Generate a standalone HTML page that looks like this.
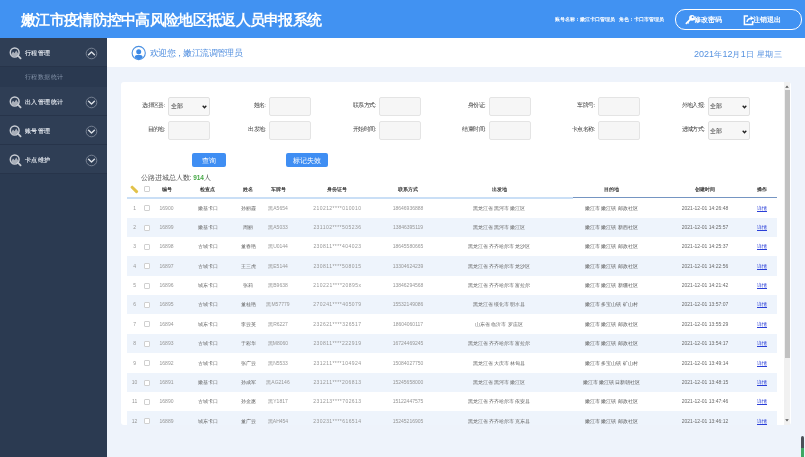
<!DOCTYPE html>
<html><head><meta charset="utf-8">
<style>
*{margin:0;padding:0;box-sizing:border-box;}
html,body{width:805px;height:457px;overflow:hidden;}
body{will-change:transform;background:#eef3fb;font-family:"Liberation Sans",sans-serif;}
.abs{position:absolute;}
#hdr{position:absolute;left:0;top:0;width:805px;height:38px;background:#4192f2;}
#title{position:absolute;left:21px;top:10.5px;font-size:15px;font-weight:700;color:#fff;white-space:nowrap;letter-spacing:-0.7px;}
#acct{position:absolute;left:555px;top:15.5px;font-size:5.4px;color:#fff;font-weight:bold;white-space:nowrap;}
#pill{position:absolute;left:674.5px;top:9px;width:127px;height:20.5px;border:1px solid #fff;border-radius:10px;}
.pt{position:absolute;top:5.2px;font-size:7px;font-weight:bold;color:#fff;white-space:nowrap;}
#side{position:absolute;left:0;top:38px;width:107px;height:419px;background:#2b3a51;}
.mi{position:absolute;left:0;width:107px;height:29px;background:#2f3e55;border-bottom:1px solid #27344a;}
.mi .ic{position:absolute;left:8px;top:6px;}
.mi .tx{position:absolute;left:25px;top:11.3px;font-size:6px;letter-spacing:0.4px;font-weight:700;color:#d9dee6;white-space:nowrap;}
.mi .cv{position:absolute;left:85px;top:9px;}
.sub{position:absolute;left:0;top:29px;width:107px;height:20px;background:#2a3950;}
.sub .tx{position:absolute;left:25px;top:6.2px;font-size:6px;letter-spacing:0.4px;color:#8796ac;white-space:nowrap;}
.cj{font-size:8px;letter-spacing:0.4px;}
#welc{position:absolute;left:107px;top:38px;width:698px;height:29px;background:#fff;}
#card{position:absolute;left:121px;top:82px;width:670px;height:343px;background:#fff;border-radius:3px;overflow:hidden;}
.lbl{position:absolute;font-size:6px;letter-spacing:-0.6px;font-weight:500;color:#3a3a3a;white-space:nowrap;text-align:right;}
.inp{position:absolute;width:42px;height:19px;background:#f6f6f6;border:1px solid #e4e4e4;border-radius:2px;}
.sel{position:absolute;width:42px;height:19px;background:#f7f7f7;border:1px solid #e0e0e0;border-radius:2px;}
.sel span{position:absolute;left:1.5px;top:4.5px;font-size:6px;font-weight:500;color:#222;}
.sel .arr{position:absolute;right:2px;top:7.5px;}
.btn{position:absolute;height:14px;background:#3f8ef3;border-radius:2px;color:#fff;font-size:6.5px;text-align:center;line-height:16px;}
.th,.td{position:absolute;width:120px;text-align:center;white-space:nowrap;font-size:5px;}
.th{color:#333;font-weight:bold;}
.td{color:#969696;font-weight:500;}
.td.cjk{color:#686868;}
.td.tm{color:#6a6a6a;}
.td.nm{color:#606060;}
.td.dk{color:#555;}
.td.op{color:#2a3fd8;}
.td.idc{letter-spacing:0.45px;}
.stripe{position:absolute;left:6.3px;width:649.4px;background:#eef4fc;}
.thline{position:absolute;left:6.3px;width:445.5px;height:2px;background:#cadff6;}
.thline2{position:absolute;left:451.8px;width:203.9px;height:1px;background:#7595c2;}
.cb{position:absolute;width:6px;height:6px;border:1px solid #d0d0d0;border-radius:1px;background:#fff;}
.pen{position:absolute;width:9px;height:2.6px;background:#e2c24a;transform:rotate(45deg);border-radius:1px;}
#sb{position:absolute;left:784px;top:82px;width:6px;height:343px;background:#f1f1f1;}
#thumb{position:absolute;left:784.8px;top:90px;width:5.2px;height:268px;background:#c1c1c1;}
#gbar{position:absolute;left:801px;top:436px;width:3px;height:25px;border-radius:1.5px;background:linear-gradient(#4b5057 0,#4b5057 12px,#3fa863 12px);}
</style></head><body>
<div id="hdr">
  <div id="title">嫩江市疫情防控中高风险地区抵返人员申报系统</div>
  <div id="acct">账号名称：嫩江卡口管理员&nbsp;&nbsp;&nbsp;角色：卡口市管理员</div>
  <div id="pill">
    <svg class="abs" style="left:9px;top:4px;" width="11" height="11" viewBox="0 0 11 11"><circle cx="7" cy="3.8" r="2.9" fill="#fff"/><circle cx="7.6" cy="3.2" r="0.9" fill="#4391ef"/><path d="M5.6 5.2 L1.4 9.4" stroke="#fff" stroke-width="1.8" stroke-linecap="round"/><path d="M2.6 8.2 L3.8 9.4" stroke="#fff" stroke-width="1.2"/></svg><div class="pt" style="left:18.3px;">修改密码</div>
    <svg class="abs" style="left:67px;top:4px;" width="12" height="12" viewBox="0 0 12 12"><path d="M5 2 H1.4 V10.4 H9.6 V7" fill="none" stroke="#fff" stroke-width="1.5"/><path d="M4 8 Q4.5 4.5 8.4 4.2" fill="none" stroke="#fff" stroke-width="1.5"/><path d="M7.6 1.8 L10.6 4.2 L7.6 6.6 Z" fill="#fff"/></svg><div class="pt" style="left:77.5px;">注销退出</div>
  </div>
</div>
<div id="side">
  <div class="mi" style="top:0;"><svg class="ic" width="18" height="18" viewBox="0 0 18 18"><circle cx="6.7" cy="8.5" r="4.4" fill="none" stroke="#c9cdd4" stroke-width="1.5"/><path d="M3.2 10.6 L5 7.6 L6.6 9.2 L8.2 6.4 L10.2 9.8 L9.6 11.6 L7 13 L4.6 12.6 Z" fill="#a9afb9"/><path d="M9.9 11.7 L12.6 14.4" stroke="#c9cdd4" stroke-width="1.8" stroke-linecap="round"/></svg><div class="tx">行程管理</div><svg class="cv" width="13" height="13" viewBox="0 0 13 13"><circle cx="6.5" cy="6.5" r="5.3" fill="none" stroke="#7d8797" stroke-width="0.9"/><path d="M3.6 7.7 L6.5 4.9 L9.4 7.7" fill="none" stroke="#dde1e7" stroke-width="1.4" stroke-linecap="round" stroke-linejoin="round"/></svg></div>
  <div class="sub"><div class="tx">行程数据统计</div></div>
  <div class="mi" style="top:49px;"><svg class="ic" width="18" height="18" viewBox="0 0 18 18"><circle cx="6.7" cy="8.5" r="4.4" fill="none" stroke="#c9cdd4" stroke-width="1.5"/><path d="M3.2 10.6 L5 7.6 L6.6 9.2 L8.2 6.4 L10.2 9.8 L9.6 11.6 L7 13 L4.6 12.6 Z" fill="#a9afb9"/><path d="M9.9 11.7 L12.6 14.4" stroke="#c9cdd4" stroke-width="1.8" stroke-linecap="round"/></svg><div class="tx">出入管理统计</div><svg class="cv" width="13" height="13" viewBox="0 0 13 13"><circle cx="6.5" cy="6.5" r="5.3" fill="none" stroke="#7d8797" stroke-width="0.9"/><path d="M3.6 5.3 L6.5 8.1 L9.4 5.3" fill="none" stroke="#dde1e7" stroke-width="1.4" stroke-linecap="round" stroke-linejoin="round"/></svg></div>
  <div class="mi" style="top:78px;"><svg class="ic" width="18" height="18" viewBox="0 0 18 18"><circle cx="6.7" cy="8.5" r="4.4" fill="none" stroke="#c9cdd4" stroke-width="1.5"/><path d="M3.2 10.6 L5 7.6 L6.6 9.2 L8.2 6.4 L10.2 9.8 L9.6 11.6 L7 13 L4.6 12.6 Z" fill="#a9afb9"/><path d="M9.9 11.7 L12.6 14.4" stroke="#c9cdd4" stroke-width="1.8" stroke-linecap="round"/></svg><div class="tx">账号管理</div><svg class="cv" width="13" height="13" viewBox="0 0 13 13"><circle cx="6.5" cy="6.5" r="5.3" fill="none" stroke="#7d8797" stroke-width="0.9"/><path d="M3.6 5.3 L6.5 8.1 L9.4 5.3" fill="none" stroke="#dde1e7" stroke-width="1.4" stroke-linecap="round" stroke-linejoin="round"/></svg></div>
  <div class="mi" style="top:107px;"><svg class="ic" width="18" height="18" viewBox="0 0 18 18"><circle cx="6.7" cy="8.5" r="4.4" fill="none" stroke="#c9cdd4" stroke-width="1.5"/><path d="M3.2 10.6 L5 7.6 L6.6 9.2 L8.2 6.4 L10.2 9.8 L9.6 11.6 L7 13 L4.6 12.6 Z" fill="#a9afb9"/><path d="M9.9 11.7 L12.6 14.4" stroke="#c9cdd4" stroke-width="1.8" stroke-linecap="round"/></svg><div class="tx">卡点维护</div><svg class="cv" width="13" height="13" viewBox="0 0 13 13"><circle cx="6.5" cy="6.5" r="5.3" fill="none" stroke="#7d8797" stroke-width="0.9"/><path d="M3.6 5.3 L6.5 8.1 L9.4 5.3" fill="none" stroke="#dde1e7" stroke-width="1.4" stroke-linecap="round" stroke-linejoin="round"/></svg></div>
</div>
<div id="welc">
  <svg class="abs" style="left:24px;top:7px;" width="16" height="16" viewBox="0 0 16 16"><circle cx="7.7" cy="8" r="6.6" fill="#fff" stroke="#4a90e2" stroke-width="1.1"/><circle cx="7.7" cy="6.7" r="2.5" fill="#3d8ae6"/><path d="M3.6 12.2 Q4.2 9.8 7.7 9.8 Q11.2 9.8 11.8 12.2 Q10.2 14.3 7.7 14.3 Q5.2 14.3 3.6 12.2 Z" fill="#3d8ae6"/></svg>
  <div class="abs" style="left:43px;top:9.3px;font-size:9px;letter-spacing:-0.63px;color:#5692e0;white-space:nowrap;">欢迎您，嫩江流调管理员</div>
  <div class="abs" style="left:587px;top:10.5px;font-size:9px;color:#5692e0;white-space:nowrap;">2021<span class="cj">年</span>12<span class="cj">月</span>1<span class="cj">日</span> <span class="cj">星期三</span></div>
</div>
<div id="card">
<div class="lbl" style="left:-16.2px;width:60px;top:18.8px;">选择区县:</div>
<div class="sel" style="left:47.3px;top:14.8px;"><span>全部</span><svg class="arr" width="5" height="4" viewBox="0 0 5 4"><path d="M0.7 0.8 L2.5 2.8 L4.3 0.8" stroke="#222" stroke-width="1.3" fill="none"/></svg></div>
<div class="lbl" style="left:-16.2px;width:60px;top:43.3px;">目的地:</div>
<div class="inp" style="left:47.3px;top:39.3px;"></div>
<div class="lbl" style="left:84.4px;width:60px;top:18.8px;">姓名:</div>
<div class="inp" style="left:147.9px;top:14.8px;"></div>
<div class="lbl" style="left:84.4px;width:60px;top:43.3px;">出发地:</div>
<div class="inp" style="left:147.9px;top:39.3px;"></div>
<div class="lbl" style="left:194.7px;width:60px;top:18.8px;">联系方式:</div>
<div class="inp" style="left:258.2px;top:14.8px;"></div>
<div class="lbl" style="left:194.7px;width:60px;top:43.3px;">开始时间:</div>
<div class="inp" style="left:258.2px;top:39.3px;"></div>
<div class="lbl" style="left:304.0px;width:60px;top:18.8px;">身份证:</div>
<div class="inp" style="left:367.5px;top:14.8px;"></div>
<div class="lbl" style="left:304.0px;width:60px;top:43.3px;">结束时间:</div>
<div class="inp" style="left:367.5px;top:39.3px;"></div>
<div class="lbl" style="left:413.6px;width:60px;top:18.8px;">车牌号:</div>
<div class="inp" style="left:477.1px;top:14.8px;"></div>
<div class="lbl" style="left:413.6px;width:60px;top:43.3px;">卡点名称:</div>
<div class="inp" style="left:477.1px;top:39.3px;"></div>
<div class="lbl" style="left:523.3px;width:60px;top:18.8px;">外地入报:</div>
<div class="sel" style="left:586.8px;top:14.8px;"><span>全部</span><svg class="arr" width="5" height="4" viewBox="0 0 5 4"><path d="M0.7 0.8 L2.5 2.8 L4.3 0.8" stroke="#222" stroke-width="1.3" fill="none"/></svg></div>
<div class="lbl" style="left:523.3px;width:60px;top:43.3px;">进城方式:</div>
<div class="sel" style="left:586.8px;top:39.3px;"><span>全部</span><svg class="arr" width="5" height="4" viewBox="0 0 5 4"><path d="M0.7 0.8 L2.5 2.8 L4.3 0.8" stroke="#222" stroke-width="1.3" fill="none"/></svg></div>
<div class="btn" style="left:71.3px;top:70.6px;width:33.4px;">查询</div>
<div class="btn" style="left:165.4px;top:70.6px;width:41.8px;">标记失效</div>
<div class="abs" style="left:19.5px;top:91.8px;font-size:6.5px;font-weight:500;color:#555;white-space:nowrap;">公路进城总人数: <b style="color:#46a846;">914</b>人</div>
<div class="thline" style="top:114.8px;"></div>
<div class="thline2" style="top:115.3px;"></div>
<div class="pen" style="left:9.1px;top:106.1px;"></div>
<div class="cb" style="left:22.5px;top:103.9px;"></div>
<div class="th" style="left:-14.5px;top:98.5px;height:17.8px;line-height:17.8px;">编号</div>
<div class="th" style="left:26.5px;top:98.5px;height:17.8px;line-height:17.8px;">检查点</div>
<div class="th" style="left:67.0px;top:98.5px;height:17.8px;line-height:17.8px;">姓名</div>
<div class="th" style="left:97.0px;top:98.5px;height:17.8px;line-height:17.8px;">车牌号</div>
<div class="th" style="left:156.4px;top:98.5px;height:17.8px;line-height:17.8px;">身份证号</div>
<div class="th" style="left:227.0px;top:98.5px;height:17.8px;line-height:17.8px;">联系方式</div>
<div class="th" style="left:318.0px;top:98.5px;height:17.8px;line-height:17.8px;">出发地</div>
<div class="th" style="left:430.5px;top:98.5px;height:17.8px;line-height:17.8px;">目的地</div>
<div class="th" style="left:524.0px;top:98.5px;height:17.8px;line-height:17.8px;">创建时间</div>
<div class="th" style="left:581.0px;top:98.5px;height:17.8px;line-height:17.8px;">操作</div>
<div class="td idx" style="left:-46.4px;top:116.0px;height:20.0px;line-height:20.0px;">1</div>
<div class="cb" style="left:22.5px;top:123.0px;"></div>
<div class="td" style="left:-14.5px;top:116.0px;height:20.0px;line-height:20.0px;">16900</div>
<div class="td cjk" style="left:26.5px;top:116.0px;height:20.0px;line-height:20.0px;">嫩基卡口</div>
<div class="td nm" style="left:67.0px;top:116.0px;height:20.0px;line-height:20.0px;">孙丽霞</div>
<div class="td" style="left:97.0px;top:116.0px;height:20.0px;line-height:20.0px;">黑A5654</div>
<div class="td idc" style="left:156.4px;top:116.0px;height:20.0px;line-height:20.0px;">210212****010010</div>
<div class="td" style="left:227.0px;top:116.0px;height:20.0px;line-height:20.0px;">18646936888</div>
<div class="td cjk" style="left:318.0px;top:116.0px;height:20.0px;line-height:20.0px;">黑龙江省 黑河市 嫩江区</div>
<div class="td dk" style="left:430.5px;top:116.0px;height:20.0px;line-height:20.0px;">嫩江市 嫩江镇 邮政社区</div>
<div class="td tm" style="left:524.0px;top:116.0px;height:20.0px;line-height:20.0px;">2021-12-01 14:26:48</div>
<div class="td op" style="left:581.0px;top:116.0px;height:20.0px;line-height:20.0px;"><u>详情</u></div>
<div class="stripe" style="top:136px;height:19px;"></div>
<div class="td idx" style="left:-46.4px;top:136.0px;height:19.0px;line-height:19.0px;">2</div>
<div class="cb" style="left:22.5px;top:142.5px;"></div>
<div class="td" style="left:-14.5px;top:136.0px;height:19.0px;line-height:19.0px;">16899</div>
<div class="td cjk" style="left:26.5px;top:136.0px;height:19.0px;line-height:19.0px;">嫩基卡口</div>
<div class="td nm" style="left:67.0px;top:136.0px;height:19.0px;line-height:19.0px;">周丽</div>
<div class="td" style="left:97.0px;top:136.0px;height:19.0px;line-height:19.0px;">黑A5033</div>
<div class="td idc" style="left:156.4px;top:136.0px;height:19.0px;line-height:19.0px;">231102****505236</div>
<div class="td" style="left:227.0px;top:136.0px;height:19.0px;line-height:19.0px;">13846395119</div>
<div class="td cjk" style="left:318.0px;top:136.0px;height:19.0px;line-height:19.0px;">黑龙江省 黑河市 嫩江区</div>
<div class="td dk" style="left:430.5px;top:136.0px;height:19.0px;line-height:19.0px;">嫩江市 嫩江镇 新西社区</div>
<div class="td tm" style="left:524.0px;top:136.0px;height:19.0px;line-height:19.0px;">2021-12-01 14:25:57</div>
<div class="td op" style="left:581.0px;top:136.0px;height:19.0px;line-height:19.0px;"><u>详情</u></div>
<div class="td idx" style="left:-46.4px;top:155.0px;height:19.0px;line-height:19.0px;">3</div>
<div class="cb" style="left:22.5px;top:161.5px;"></div>
<div class="td" style="left:-14.5px;top:155.0px;height:19.0px;line-height:19.0px;">16898</div>
<div class="td cjk" style="left:26.5px;top:155.0px;height:19.0px;line-height:19.0px;">古城卡口</div>
<div class="td nm" style="left:67.0px;top:155.0px;height:19.0px;line-height:19.0px;">董春艳</div>
<div class="td" style="left:97.0px;top:155.0px;height:19.0px;line-height:19.0px;">黑U0144</div>
<div class="td idc" style="left:156.4px;top:155.0px;height:19.0px;line-height:19.0px;">230811****404023</div>
<div class="td" style="left:227.0px;top:155.0px;height:19.0px;line-height:19.0px;">18645580665</div>
<div class="td cjk" style="left:318.0px;top:155.0px;height:19.0px;line-height:19.0px;">黑龙江省 齐齐哈尔市 龙沙区</div>
<div class="td dk" style="left:430.5px;top:155.0px;height:19.0px;line-height:19.0px;">嫩江市 嫩江镇 邮政社区</div>
<div class="td tm" style="left:524.0px;top:155.0px;height:19.0px;line-height:19.0px;">2021-12-01 14:25:37</div>
<div class="td op" style="left:581.0px;top:155.0px;height:19.0px;line-height:19.0px;"><u>详情</u></div>
<div class="stripe" style="top:174px;height:20px;"></div>
<div class="td idx" style="left:-46.4px;top:174.0px;height:20.0px;line-height:20.0px;">4</div>
<div class="cb" style="left:22.5px;top:181.0px;"></div>
<div class="td" style="left:-14.5px;top:174.0px;height:20.0px;line-height:20.0px;">16897</div>
<div class="td cjk" style="left:26.5px;top:174.0px;height:20.0px;line-height:20.0px;">古城卡口</div>
<div class="td nm" style="left:67.0px;top:174.0px;height:20.0px;line-height:20.0px;">王三虎</div>
<div class="td" style="left:97.0px;top:174.0px;height:20.0px;line-height:20.0px;">黑E5144</div>
<div class="td idc" style="left:156.4px;top:174.0px;height:20.0px;line-height:20.0px;">230811****508015</div>
<div class="td" style="left:227.0px;top:174.0px;height:20.0px;line-height:20.0px;">13304624239</div>
<div class="td cjk" style="left:318.0px;top:174.0px;height:20.0px;line-height:20.0px;">黑龙江省 齐齐哈尔市 龙沙区</div>
<div class="td dk" style="left:430.5px;top:174.0px;height:20.0px;line-height:20.0px;">嫩江市 嫩江镇 邮政社区</div>
<div class="td tm" style="left:524.0px;top:174.0px;height:20.0px;line-height:20.0px;">2021-12-01 14:22:56</div>
<div class="td op" style="left:581.0px;top:174.0px;height:20.0px;line-height:20.0px;"><u>详情</u></div>
<div class="td idx" style="left:-46.4px;top:194.0px;height:19.0px;line-height:19.0px;">5</div>
<div class="cb" style="left:22.5px;top:200.5px;"></div>
<div class="td" style="left:-14.5px;top:194.0px;height:19.0px;line-height:19.0px;">16896</div>
<div class="td cjk" style="left:26.5px;top:194.0px;height:19.0px;line-height:19.0px;">城东卡口</div>
<div class="td nm" style="left:67.0px;top:194.0px;height:19.0px;line-height:19.0px;">张莉</div>
<div class="td" style="left:97.0px;top:194.0px;height:19.0px;line-height:19.0px;">黑B9638</div>
<div class="td idc" style="left:156.4px;top:194.0px;height:19.0px;line-height:19.0px;">210221****20895x</div>
<div class="td" style="left:227.0px;top:194.0px;height:19.0px;line-height:19.0px;">13846294568</div>
<div class="td cjk" style="left:318.0px;top:194.0px;height:19.0px;line-height:19.0px;">黑龙江省 齐齐哈尔市 富拉尔</div>
<div class="td dk" style="left:430.5px;top:194.0px;height:19.0px;line-height:19.0px;">嫩江市 嫩江镇 新疆社区</div>
<div class="td tm" style="left:524.0px;top:194.0px;height:19.0px;line-height:19.0px;">2021-12-01 14:21:42</div>
<div class="td op" style="left:581.0px;top:194.0px;height:19.0px;line-height:19.0px;"><u>详情</u></div>
<div class="stripe" style="top:213px;height:19px;"></div>
<div class="td idx" style="left:-46.4px;top:213.0px;height:19.0px;line-height:19.0px;">6</div>
<div class="cb" style="left:22.5px;top:219.5px;"></div>
<div class="td" style="left:-14.5px;top:213.0px;height:19.0px;line-height:19.0px;">16895</div>
<div class="td cjk" style="left:26.5px;top:213.0px;height:19.0px;line-height:19.0px;">古城卡口</div>
<div class="td nm" style="left:67.0px;top:213.0px;height:19.0px;line-height:19.0px;">董桂艳</div>
<div class="td" style="left:97.0px;top:213.0px;height:19.0px;line-height:19.0px;">黑M57779</div>
<div class="td idc" style="left:156.4px;top:213.0px;height:19.0px;line-height:19.0px;">270241****405079</div>
<div class="td" style="left:227.0px;top:213.0px;height:19.0px;line-height:19.0px;">15532149086</div>
<div class="td cjk" style="left:318.0px;top:213.0px;height:19.0px;line-height:19.0px;">黑龙江省 绥化市 明水县</div>
<div class="td dk" style="left:430.5px;top:213.0px;height:19.0px;line-height:19.0px;">嫩江市 多宝山镇 矿山村</div>
<div class="td tm" style="left:524.0px;top:213.0px;height:19.0px;line-height:19.0px;">2021-12-01 13:57:07</div>
<div class="td op" style="left:581.0px;top:213.0px;height:19.0px;line-height:19.0px;"><u>详情</u></div>
<div class="td idx" style="left:-46.4px;top:232.0px;height:20.0px;line-height:20.0px;">7</div>
<div class="cb" style="left:22.5px;top:239.0px;"></div>
<div class="td" style="left:-14.5px;top:232.0px;height:20.0px;line-height:20.0px;">16894</div>
<div class="td cjk" style="left:26.5px;top:232.0px;height:20.0px;line-height:20.0px;">城东卡口</div>
<div class="td nm" style="left:67.0px;top:232.0px;height:20.0px;line-height:20.0px;">李云英</div>
<div class="td" style="left:97.0px;top:232.0px;height:20.0px;line-height:20.0px;">黑R6227</div>
<div class="td idc" style="left:156.4px;top:232.0px;height:20.0px;line-height:20.0px;">232621****326517</div>
<div class="td" style="left:227.0px;top:232.0px;height:20.0px;line-height:20.0px;">18604060117</div>
<div class="td cjk" style="left:318.0px;top:232.0px;height:20.0px;line-height:20.0px;">山东省 临沂市 罗庄区</div>
<div class="td dk" style="left:430.5px;top:232.0px;height:20.0px;line-height:20.0px;">嫩江市 嫩江镇 邮政社区</div>
<div class="td tm" style="left:524.0px;top:232.0px;height:20.0px;line-height:20.0px;">2021-12-01 13:55:29</div>
<div class="td op" style="left:581.0px;top:232.0px;height:20.0px;line-height:20.0px;"><u>详情</u></div>
<div class="stripe" style="top:252px;height:19px;"></div>
<div class="td idx" style="left:-46.4px;top:252.0px;height:19.0px;line-height:19.0px;">8</div>
<div class="cb" style="left:22.5px;top:258.5px;"></div>
<div class="td" style="left:-14.5px;top:252.0px;height:19.0px;line-height:19.0px;">16893</div>
<div class="td cjk" style="left:26.5px;top:252.0px;height:19.0px;line-height:19.0px;">古城卡口</div>
<div class="td nm" style="left:67.0px;top:252.0px;height:19.0px;line-height:19.0px;">于彩华</div>
<div class="td" style="left:97.0px;top:252.0px;height:19.0px;line-height:19.0px;">黑M8060</div>
<div class="td idc" style="left:156.4px;top:252.0px;height:19.0px;line-height:19.0px;">230811****222919</div>
<div class="td" style="left:227.0px;top:252.0px;height:19.0px;line-height:19.0px;">16724469245</div>
<div class="td cjk" style="left:318.0px;top:252.0px;height:19.0px;line-height:19.0px;">黑龙江省 齐齐哈尔市 富拉尔</div>
<div class="td dk" style="left:430.5px;top:252.0px;height:19.0px;line-height:19.0px;">嫩江市 嫩江镇 邮政社区</div>
<div class="td tm" style="left:524.0px;top:252.0px;height:19.0px;line-height:19.0px;">2021-12-01 13:54:17</div>
<div class="td op" style="left:581.0px;top:252.0px;height:19.0px;line-height:19.0px;"><u>详情</u></div>
<div class="td idx" style="left:-46.4px;top:271.0px;height:20.0px;line-height:20.0px;">9</div>
<div class="cb" style="left:22.5px;top:278.0px;"></div>
<div class="td" style="left:-14.5px;top:271.0px;height:20.0px;line-height:20.0px;">16892</div>
<div class="td cjk" style="left:26.5px;top:271.0px;height:20.0px;line-height:20.0px;">古城卡口</div>
<div class="td nm" style="left:67.0px;top:271.0px;height:20.0px;line-height:20.0px;">张广云</div>
<div class="td" style="left:97.0px;top:271.0px;height:20.0px;line-height:20.0px;">黑N5533</div>
<div class="td idc" style="left:156.4px;top:271.0px;height:20.0px;line-height:20.0px;">231211****104924</div>
<div class="td" style="left:227.0px;top:271.0px;height:20.0px;line-height:20.0px;">15084027750</div>
<div class="td cjk" style="left:318.0px;top:271.0px;height:20.0px;line-height:20.0px;">黑龙江省 大庆市 林甸县</div>
<div class="td dk" style="left:430.5px;top:271.0px;height:20.0px;line-height:20.0px;">嫩江市 多宝山镇 矿山村</div>
<div class="td tm" style="left:524.0px;top:271.0px;height:20.0px;line-height:20.0px;">2021-12-01 13:49:14</div>
<div class="td op" style="left:581.0px;top:271.0px;height:20.0px;line-height:20.0px;"><u>详情</u></div>
<div class="stripe" style="top:291px;height:19px;"></div>
<div class="td idx" style="left:-46.4px;top:291.0px;height:19.0px;line-height:19.0px;">10</div>
<div class="cb" style="left:22.5px;top:297.5px;"></div>
<div class="td" style="left:-14.5px;top:291.0px;height:19.0px;line-height:19.0px;">16891</div>
<div class="td cjk" style="left:26.5px;top:291.0px;height:19.0px;line-height:19.0px;">嫩基卡口</div>
<div class="td nm" style="left:67.0px;top:291.0px;height:19.0px;line-height:19.0px;">孙成军</div>
<div class="td" style="left:97.0px;top:291.0px;height:19.0px;line-height:19.0px;">黑AG2146</div>
<div class="td idc" style="left:156.4px;top:291.0px;height:19.0px;line-height:19.0px;">231211****206813</div>
<div class="td" style="left:227.0px;top:291.0px;height:19.0px;line-height:19.0px;">15245658000</div>
<div class="td cjk" style="left:318.0px;top:291.0px;height:19.0px;line-height:19.0px;">黑龙江省 黑河市 嫩江区</div>
<div class="td dk" style="left:430.5px;top:291.0px;height:19.0px;line-height:19.0px;">嫩江市 嫩江镇 日新朝社区</div>
<div class="td tm" style="left:524.0px;top:291.0px;height:19.0px;line-height:19.0px;">2021-12-01 13:48:15</div>
<div class="td op" style="left:581.0px;top:291.0px;height:19.0px;line-height:19.0px;"><u>详情</u></div>
<div class="td idx" style="left:-46.4px;top:310.0px;height:19.0px;line-height:19.0px;">11</div>
<div class="cb" style="left:22.5px;top:316.5px;"></div>
<div class="td" style="left:-14.5px;top:310.0px;height:19.0px;line-height:19.0px;">16890</div>
<div class="td cjk" style="left:26.5px;top:310.0px;height:19.0px;line-height:19.0px;">古城卡口</div>
<div class="td nm" style="left:67.0px;top:310.0px;height:19.0px;line-height:19.0px;">孙金惠</div>
<div class="td" style="left:97.0px;top:310.0px;height:19.0px;line-height:19.0px;">黑Y1817</div>
<div class="td idc" style="left:156.4px;top:310.0px;height:19.0px;line-height:19.0px;">231213****702613</div>
<div class="td" style="left:227.0px;top:310.0px;height:19.0px;line-height:19.0px;">15122447575</div>
<div class="td cjk" style="left:318.0px;top:310.0px;height:19.0px;line-height:19.0px;">黑龙江省 齐齐哈尔市 依安县</div>
<div class="td dk" style="left:430.5px;top:310.0px;height:19.0px;line-height:19.0px;">嫩江市 嫩江镇 邮政社区</div>
<div class="td tm" style="left:524.0px;top:310.0px;height:19.0px;line-height:19.0px;">2021-12-01 13:47:46</div>
<div class="td op" style="left:581.0px;top:310.0px;height:19.0px;line-height:19.0px;"><u>详情</u></div>
<div class="stripe" style="top:329px;height:20px;"></div>
<div class="td idx" style="left:-46.4px;top:329.0px;height:20.0px;line-height:20.0px;">12</div>
<div class="cb" style="left:22.5px;top:336.0px;"></div>
<div class="td" style="left:-14.5px;top:329.0px;height:20.0px;line-height:20.0px;">16889</div>
<div class="td cjk" style="left:26.5px;top:329.0px;height:20.0px;line-height:20.0px;">城东卡口</div>
<div class="td nm" style="left:67.0px;top:329.0px;height:20.0px;line-height:20.0px;">董广云</div>
<div class="td" style="left:97.0px;top:329.0px;height:20.0px;line-height:20.0px;">黑AH454</div>
<div class="td idc" style="left:156.4px;top:329.0px;height:20.0px;line-height:20.0px;">230231****616514</div>
<div class="td" style="left:227.0px;top:329.0px;height:20.0px;line-height:20.0px;">15245216905</div>
<div class="td cjk" style="left:318.0px;top:329.0px;height:20.0px;line-height:20.0px;">黑龙江省 齐齐哈尔市 克东县</div>
<div class="td dk" style="left:430.5px;top:329.0px;height:20.0px;line-height:20.0px;">嫩江市 嫩江镇 邮政社区</div>
<div class="td tm" style="left:524.0px;top:329.0px;height:20.0px;line-height:20.0px;">2021-12-01 13:46:12</div>
<div class="td op" style="left:581.0px;top:329.0px;height:20.0px;line-height:20.0px;"><u>详情</u></div>
</div>
<div id="sb"></div><div id="thumb"></div>
<svg class="abs" style="left:784px;top:84px;" width="6" height="5" viewBox="0 0 6 5"><path d="M1.2 3.8 L3 1.4 L4.8 3.8 Z" fill="#555"/></svg>
<svg class="abs" style="left:784px;top:418px;" width="6" height="5" viewBox="0 0 6 5"><path d="M1.2 1.2 L3 3.6 L4.8 1.2 Z" fill="#555"/></svg>
<div id="gbar"></div>
</body></html>
